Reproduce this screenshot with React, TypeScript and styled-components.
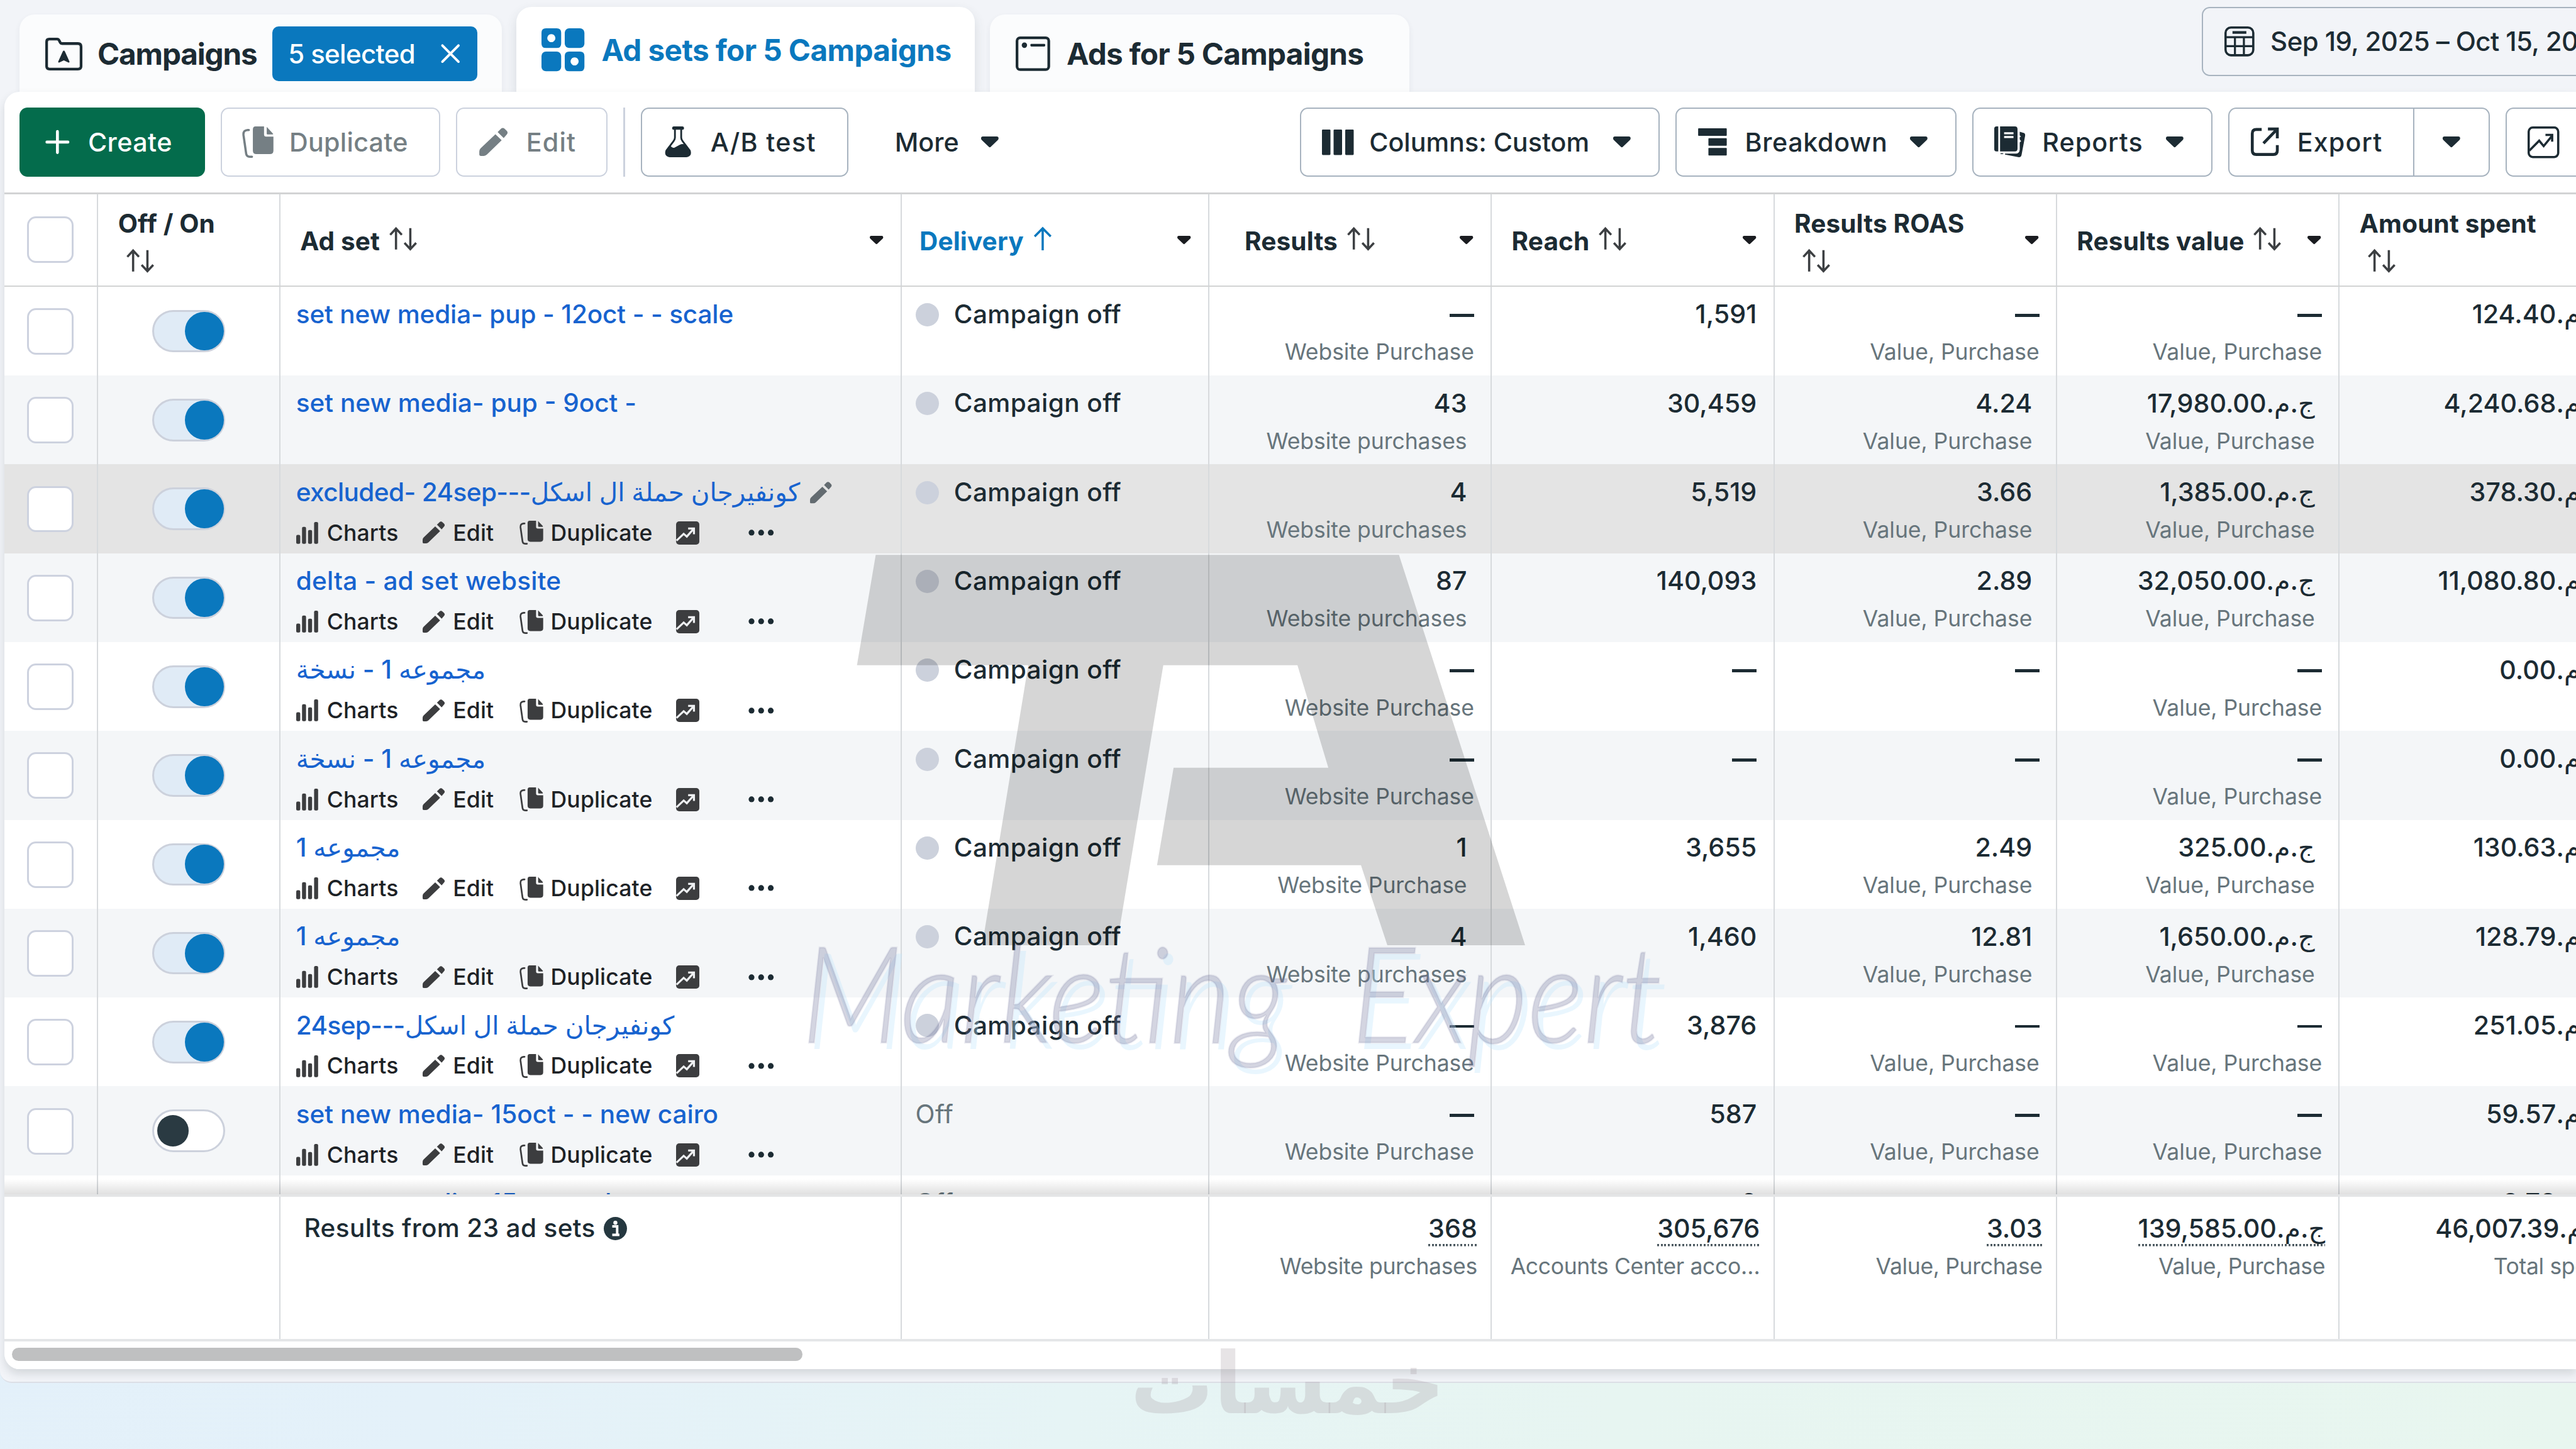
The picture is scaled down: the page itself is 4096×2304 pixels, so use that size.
import React from "react";
import styled, { createGlobalStyle, css } from "styled-components";

const r = (n: number) => `${((n * 4096) / 5760).toFixed(2)}px`;

const ink = "#1c2b33";
const muted = "#67757c";
const blue = "#0a78be";
const link = "#1763cf";
const line = "#d7dadd";
const latin = `Inter, "DejaVu Sans", sans-serif`;

const GlobalStyle = createGlobalStyle`
  html, body { margin: 0; padding: 0; }
  body { width: 4096px; height: 2304px; overflow: hidden; background: #e6f4f5; }
  * { box-sizing: border-box; }
`;

const Page = styled.div`
  position: relative;
  width: 4096px;
  height: 2304px;
  overflow: hidden;
  font-family: ${latin};
  color: ${ink};
  background: linear-gradient(97deg, #e3f0fa 0%, #e4f1f9 22%, #e6f4f5 45%, #e7f5f1 65%, #e8f6ef 100%);
`;

const Shell = styled.main`
  height: ${r(3093)};
  padding-left: ${r(10)};
  background: #f2f4f8;
  border-bottom: ${r(4)} solid #dcdfe6;
  border-bottom-left-radius: ${r(26)};
`;

/* ---------- tabs ---------- */
const TopBar = styled.header`
  display: flex;
  align-items: flex-end;
  height: ${r(205)};
  padding-left: ${r(33)};
`;

const Tab = styled.div<{ $active?: boolean; $w: number }>`
  flex: none;
  display: flex;
  align-items: center;
  width: ${(p) => r(p.$w)};
  height: ${(p) => r(p.$active ? 190 : 173)};
  margin-right: ${r(33)};
  border-radius: ${r(34)} ${r(34)} 0 0;
  background: ${(p) => (p.$active ? "#fff" : "#fbfcfd")};
  color: ${(p) => (p.$active ? blue : ink)};
  box-shadow: ${(p) => (p.$active ? `0 ${r(12)} ${r(26)} rgba(60, 70, 80, 0.14)` : `0 ${r(6)} ${r(14)} rgba(60, 70, 80, 0.07)`)};
  padding: ${r(4)} 0 0 ${(p) => r(p.$active ? 56 : 58)};
`;

const TabLabel = styled.span<{ $ls?: number; $gap: number }>`
  margin-left: ${(p) => r(p.$gap)};
  font-weight: 700;
  font-size: ${r(67)};
  line-height: ${r(90)};
  letter-spacing: ${(p) => r(p.$ls ?? 0)};
  white-space: nowrap;
`;

const Pill = styled.span`
  display: flex;
  align-items: center;
  width: ${r(458)};
  height: ${r(122)};
  margin-left: ${r(35)};
  padding-left: ${r(35)};
  border-radius: ${r(14)};
  background: ${blue};
  color: #fff;
  font-weight: 500;
  font-size: ${r(59)};
  letter-spacing: ${r(-0.9)};
  white-space: nowrap;
  svg { margin-left: auto; margin-right: ${r(40)}; }
`;

const DateRange = styled.div`
  flex: none;
  display: flex;
  align-items: center;
  align-self: flex-start;
  width: ${r(1100)};
  height: ${r(155)};
  margin: ${r(15)} 0 0 ${r(1739)};
  padding-left: ${r(47)};
  gap: ${r(36)};
  border: ${r(4)} solid #a7b3bf;
  border-radius: ${r(18)};
  font-weight: 500;
  font-size: ${r(59)};
  letter-spacing: ${r(-0.8)};
  white-space: nowrap;
`;

/* ---------- panel & toolbar ---------- */
const Panel = styled.section`
  position: relative;
  height: ${r(2857)};
  overflow: hidden;
  background: #fff;
  border-radius: ${r(34)} 0 0 ${r(34)};
`;

const PanelShadow = styled.div`
  position: relative;
  border-radius: ${r(34)} 0 0 ${r(34)};
  box-shadow: 0 ${r(10)} ${r(20)} rgba(50, 60, 70, 0.15);
`;

const Toolbar = styled.div`
  display: flex;
  align-items: center;
  height: ${r(225)};
  padding-left: ${r(33)};
  width: ${r(6400)};
`;

const Group = styled.div<{ $gap: number; $ml?: number }>`
  display: flex;
  align-items: center;
  gap: ${(p) => r(p.$gap)};
  margin-left: ${(p) => r(p.$ml ?? 0)};
`;

type Tone = "primary" | "disabled" | "normal" | "bare";
const tones = {
  primary: css`background: #046c4c; color: #fff; border-color: #046c4c;`,
  disabled: css`background: #fff; color: #757f84; border-color: #ccd2de;`,
  normal: css`background: #fff; color: ${ink}; border-color: #a7b3bf;`,
  bare: css`background: none; color: ${ink}; border-color: transparent; padding-left: ${r(66)};`,
};

const ToolButton = styled.button<{ $tone: Tone; $w: number; $ls?: number; $gap?: number }>`
  flex: none;
  display: flex;
  align-items: center;
  width: ${(p) => r(p.$w)};
  height: ${r(155)};
  padding: 0 ${r(62)} 0 ${r(46)};
  gap: ${(p) => r(p.$gap ?? 35)};
  border: ${r(4)} solid;
  border-radius: ${r(18)};
  ${(p) => tones[p.$tone]}
  font-family: ${latin};
  font-weight: 500;
  font-size: ${r(58)};
  letter-spacing: ${(p) => r(p.$ls ?? 0)};
  white-space: nowrap;
  .caret { margin-left: auto; }
`;

const Split = styled.div`
  flex: none;
  display: flex;
  ${ToolButton}:first-child { border-radius: ${r(18)} 0 0 ${r(18)}; border-right: 0; }
  ${ToolButton}:last-child { border-radius: 0 ${r(18)} ${r(18)} 0; padding: 0; justify-content: center; }
  ${ToolButton}:last-child .caret { margin: 0; }
`;

const Divider = styled.span`
  width: ${r(4)};
  height: ${r(155)};
  background: #ccd2de;
`;

/* ---------- table ---------- */
const columns = [210, 407, 1389, 688, 632, 632, 632, 632, 632].map(r).join(" ");

const HeadRow = styled.div`
  display: grid;
  grid-template-columns: ${columns};
  height: ${r(211)};
  border-top: ${r(5)} solid #d2d3d4;
  border-bottom: ${r(4)} solid #d2d3d4;
`;

const cellBorder = css`border-right: ${r(4)} solid ${line};`;

const HeadCell = styled.div<{ $pl: number; $pr?: number; $hot?: boolean }>`
  ${cellBorder}
  display: flex;
  align-items: center;
  justify-content: space-between;
  padding-left: ${(p) => r(p.$pl)};
  padding-right: ${(p) => r(p.$pr ?? 39)};
  color: ${(p) => (p.$hot ? blue : ink)};
  .caret { flex: none; color: #1a1c20; }
`;

const HeadLabel = styled.div<{ $stack?: boolean }>`
  display: flex;
  flex-direction: ${(p) => (p.$stack ? "column" : "row")};
  align-items: ${(p) => (p.$stack ? "flex-start" : "center")};
  gap: ${(p) => r(p.$stack ? 0 : 21)};
  padding-top: ${(p) => r(p.$stack ? 0 : 9)};
  margin-top: ${(p) => r(p.$stack ? -5 : 0)};
  font-weight: 700;
  font-size: ${r(57)};
  line-height: ${r(80)};
  letter-spacing: ${r(0.2)};
  white-space: nowrap;
  svg { margin: ${(p) => (p.$stack ? `${r(16)} 0 ${r(-2)} ${r(18)}` : `${r(-14)} 0 0`)}; }
`;

const Rows = styled.div`
  height: ${r(2030)};
  overflow: hidden;
  position: relative;
`;

const RowShade = styled.div`
  position: absolute;
  left: 0;
  right: 0;
  bottom: 0;
  height: ${r(34)};
  background: linear-gradient(to bottom, rgba(0, 0, 0, 0), rgba(0, 0, 0, 0.12));
`;

const Row = styled.div<{ $bg: string }>`
  display: grid;
  grid-template-columns: ${columns};
  height: ${r(198.7)};
  background: ${(p) => p.$bg};
`;

const Cell = styled.div<{ $pl?: number; $pt?: number }>`
  ${cellBorder}
  min-width: 0;
  padding-left: ${(p) => r(p.$pl ?? 0)};
  padding-top: ${(p) => r(p.$pt ?? 0)};
`;

const Checkbox = styled.span`
  display: block;
  width: ${r(104)};
  height: ${r(104)};
  border: ${r(5)} solid #cdd2df;
  border-radius: ${r(20)};
  background: #fff;
`;

const Track = styled.span<{ $on: boolean }>`
  display: flex;
  align-items: center;
  justify-content: ${(p) => (p.$on ? "flex-end" : "flex-start")};
  width: ${r(162)};
  height: ${r(95)};
  border: ${r(5)} solid #ccd1dc;
  border-radius: ${r(48)};
  background: ${(p) => (p.$on ? "#e0ebf6" : "#fff")};
  padding-left: ${(p) => r(p.$on ? 0 : 7)};
`;

const Knob = styled.span<{ $on: boolean }>`
  flex: none;
  width: ${(p) => r(p.$on ? 87 : 70)};
  height: ${(p) => r(p.$on ? 87 : 70)};
  margin-right: ${(p) => r(p.$on ? -2 : 0)};
  border-radius: 50%;
  background: ${(p) => (p.$on ? blue : "#2a3a42")};
`;

const NameLine = styled.div`
  display: flex;
  align-items: center;
  gap: ${r(22)};
  height: ${r(80)};
  color: #636b70;
`;

const Name = styled.a<{ $ls?: number }>`
  color: ${link};
  font-weight: 500;
  font-size: ${r(57)};
  line-height: ${r(80)};
  letter-spacing: ${(p) => r(p.$ls ?? 0)};
  white-space: nowrap;
  unicode-bidi: isolate;
`;

const Actions = styled.div`
  display: flex;
  align-items: center;
  height: ${r(64)};
  margin-top: ${r(18)};
  color: #3c3d3f;
`;

const Action = styled.span<{ $gap: number; $mr: number }>`
  display: flex;
  align-items: center;
  gap: ${(p) => r(p.$gap)};
  margin-right: ${(p) => r(p.$mr)};
  font-size: ${r(50)};
  font-weight: 500;
  letter-spacing: ${r(0.2)};
  white-space: nowrap;
  b { font-weight: 500; color: #1d2226; }
`;

const Status = styled.div<{ $off?: boolean }>`
  display: flex;
  align-items: center;
  gap: ${r(34)};
  font-size: ${r(57)};
  line-height: ${r(80)};
  font-weight: ${(p) => (p.$off ? 400 : 500)};
  letter-spacing: ${r(0.6)};
  white-space: nowrap;
  color: ${(p) => (p.$off ? muted : ink)};
`;

const Dot = styled.span`
  width: ${r(52)};
  height: ${r(52)};
  border-radius: 50%;
  background: #ccd1dc;
`;

const Metric = styled.div<{ $pr: number; $pt?: number }>`
  ${cellBorder}
  display: flex;
  flex-direction: column;
  align-items: flex-end;
  gap: ${r(10)};
  padding-top: ${(p) => r(p.$pt ?? 22)};
  padding-right: ${(p) => r(p.$pr)};
  white-space: nowrap;
`;

const Value = styled.span<{ $dotted?: boolean }>`
  font-size: ${r(58)};
  line-height: ${r(80)};
  font-weight: 500;
  letter-spacing: 0;
  unicode-bidi: isolate;
  ${(p) =>
    p.$dotted &&
    css`
      height: ${r(80)};
      background: repeating-linear-gradient(to right, #4a575e 0 ${r(4)}, transparent ${r(4)} ${r(8)}) left bottom / 100% ${r(5)} no-repeat;
    `}
`;

const Dash = styled.span`
  width: ${r(55)};
  height: ${r(7)};
  margin: ${r(39)} 0 ${r(34)};
  background: ${ink};
`;

const Sub = styled.span<{ $tight?: boolean }>`
  font-size: ${r(50)};
  line-height: ${r(70)};
  font-weight: 400;
  letter-spacing: ${(p) => r(p.$tight ? -0.5 : -0.1)};
  color: ${muted};
`;

const FootRow = styled.div`
  display: grid;
  grid-template-columns: ${r(617)} ${[1389, 688, 632, 632, 632, 632, 632].map(r).join(" ")};
  height: ${r(329)};
  border-top: ${r(6)} solid #e4e5e6;
  border-bottom: ${r(6)} solid #e4e6e8;
`;

const FootLabel = styled.div`
  display: flex;
  align-items: center;
  gap: ${r(18)};
  font-size: ${r(57)};
  line-height: ${r(80)};
  letter-spacing: ${r(0.5)};
  font-weight: 500;
  white-space: nowrap;
`;

const ScrollThumb = styled.div`
  width: ${r(1767)};
  height: ${r(30)};
  margin: ${r(13)} 0 0 ${r(17)};
  border-radius: ${r(15)};
  background: #bfc0c1;
`;

/* ---------- overlays ---------- */
const Monogram = styled.svg`
  position: absolute;
  left: ${r(1700)};
  top: ${r(1200)};
  width: ${r(2100)};
  height: ${r(1300)};
`;

const Stamp = styled.svg`
  position: absolute;
  left: ${r(2500)};
  top: ${r(2990)};
  width: ${r(760)};
  height: ${r(250)};
`;

/* ---------- icons ---------- */
const Svg = styled.svg<{ $w: number; $h: number }>`
  flex: none;
  display: block;
  width: ${(p) => r(p.$w)};
  height: ${(p) => r(p.$h)};
  fill: currentColor;
  overflow: visible;
`;

const Caret = ({ w = 39 }: { w?: number }) => (
  <Svg className="caret" $w={w} $h={w * 0.63} viewBox="0 0 39 24.5">
    <path d="M4 0h31q4 0 4 4v1q0 2-2 3.500L22 23q-2.500 2.500-5 0L2 8.500Q0 7 0 5V4q0-4 4-4z" />
  </Svg>
);

const FolderIcon = () => (
  <Svg $w={83} $h={73} viewBox="0 0 83 73">
    <path d="M3 64V9q0-6 6-6h17q4 0 5.500 4l2 4q1 2 4 2H73q7 0 7 7v44q0 6-7 6H10q-7 0-7-6z" fill="none" stroke="currentColor" strokeWidth="6" />
    <path d="M41.500 29q1.500 0 2.500 2l10 22q1 3-2 2.500l-10.500-5-10.500 5q-3 .5-2-2.500l10-22q1-2 2.500-2z" />
  </Svg>
);

const GridIcon = () => (
  <Svg $w={96} $h={96} viewBox="0 0 96 96">
    <path fillRule="evenodd" d="M10 0h24q10 0 10 10v24q0 10-10 10H10Q0 44 0 34V10Q0 0 10 0zM22 13a9 9 0 1 0 .01 0z" />
    <rect x="52" width="44" height="44" rx="10" />
    <rect y="52" width="44" height="44" rx="10" />
    <path fillRule="evenodd" d="M62 52h24q10 0 10 10v24q0 10-10 10H62q-10 0-10-10V62q0-10 10-10zM74 65a9 9 0 1 0 .01 0z" />
  </Svg>
);

const WindowIcon = () => (
  <Svg $w={77} $h={77} viewBox="0 0 77 77">
    <rect x="3" y="3" width="71" height="71" rx="7" fill="none" stroke="currentColor" strokeWidth="6" />
    <circle cx="19.500" cy="19.500" r="6" />
    <rect x="33" y="16.500" width="33" height="6" rx="2" />
  </Svg>
);

const CloseIcon = () => (
  <Svg $w={40} $h={40} viewBox="0 0 40 40">
    <path d="M2 2l36 36M38 2L2 38" stroke="currentColor" strokeWidth="5.500" strokeLinecap="round" />
  </Svg>
);

const CalendarIcon = () => (
  <Svg $w={67} $h={67} viewBox="0 0 67 67">
    <rect x="2.500" y="2.500" width="62" height="62" rx="12" fill="none" stroke="currentColor" strokeWidth="5" />
    <path d="M2 24h63M2 44h63M23.500 24v41M43.500 24v41" stroke="currentColor" strokeWidth="4.500" />
    <path d="M18 13.500h31" stroke="currentColor" strokeWidth="6" />
  </Svg>
);

const PlusIcon = () => (
  <Svg $w={70} $h={70} viewBox="0 0 70 70">
    <path d="M37 11.500v47M13.500 35h47" stroke="currentColor" strokeWidth="6.500" strokeLinecap="round" />
  </Svg>
);

const DuplicateIcon = ({ s = 70 }: { s?: number }) => (
  <Svg $w={s} $h={s} viewBox="0 0 70 70">
    <path d="M30 0h19v18q0 5 5 5h16v31q0 8-8 8H32q-8 0-8-8V7q0-7 6-7z" />
    <path d="M55 1l14 15q1 2-1 2H57q-2 0-2-2z" />
    <path d="M15 8h-3Q2 9 3 19l6 42q1 7 8 7h5" fill="none" stroke="currentColor" strokeWidth="5" strokeLinecap="round" />
  </Svg>
);

const PencilIcon = ({ s = 64, pad = 0 }: { s?: number; pad?: number }) => (
  <Svg $w={s} $h={s} viewBox={`${-pad} ${-pad} ${64 + pad * 2} ${64 + pad * 2}`}>
    <path d="M36 14.500L50 28 17 60q-3 3-7 3H3q-3 0-3-3v-7q0-4 3-7z" />
    <path d="M41 9.500l7-7q4.500-4 9 0l4 4q4.500 4.500 0 9L54.500 23z" />
  </Svg>
);

const FlaskIcon = () => (
  <Svg $w={70} $h={70} viewBox="0 0 70 70">
    <path d="M24.500 3.800h19" stroke="currentColor" strokeWidth="7.500" strokeLinecap="round" />
    <path d="M27 4v21q0 4-3 8L8 54q-4 12 9 13h34q13-1 9-13L44 33q-3-4-3-8V4" fill="none" stroke="currentColor" strokeWidth="4" />
    <path d="M17 42q2 7 9 5.500l11-6q6-3 12-1.500l10 13q4 13-9 16H18Q5 66 7 54z" />
  </Svg>
);

const ColumnsIcon = () => (
  <Svg $w={71} $h={57} viewBox="0 0 71 57">
    <rect width="19" height="57" rx="2" />
    <rect x="26" width="19" height="57" rx="2" />
    <rect x="52" width="19" height="57" rx="2" />
  </Svg>
);

const BreakdownIcon = () => (
  <Svg $w={70} $h={62} viewBox="-3 0 70 62">
    <rect width="64" height="17" rx="1.500" />
    <rect x="23" y="22" width="41" height="17" rx="1.500" />
    <rect x="23" y="44" width="41" height="17" rx="1.500" />
  </Svg>
);

const ReportsIcon = () => (
  <Svg $w={70} $h={70} viewBox="0 0 70 70">
    <path d="M5 0h4v56H5q-5 0-5-5V5q0-5 5-5z" />
    <path fillRule="evenodd" d="M13 0h33q6 0 6 6v44q0 6-6 6H13zM22 13v4.500h21V13zM22 21.500V26h21v-4.500z" />
    <path d="M57 12l7 2q6 1 5 7l-8 43q-1 5-6 5l-31-6v-2h24q8 0 9-9V36l3-3-3-4v-5l3-1-3-3zM14 60h6v2h-6z" />
  </Svg>
);

const ExportIcon = () => (
  <Svg $w={68} $h={64} viewBox="-3 0 68 64">
    <path d="M24 4H12q-9 0-9 9v38q0 9 9 9h38q9 0 9-9V39M38 3h21v21M59 3L28 35" fill="none" stroke="currentColor" strokeWidth="6.500" />
  </Svg>
);

const TrendIcon = () => (
  <Svg $w={71} $h={71} viewBox="0 0 71 71">
    <rect x="2.500" y="2.500" width="66" height="66" rx="9" fill="none" stroke="currentColor" strokeWidth="5" />
    <path d="M4 54l22-22 10 12 18-22M40 19h15v15" fill="none" stroke="currentColor" strokeWidth="5" />
  </Svg>
);

const TrendSolidIcon = () => (
  <Svg $w={52} $h={52} viewBox="0 0 52 52">
    <rect width="52" height="52" rx="7" />
    <path d="M1 43l16-15 7 6 15-17M27 16h13v13" fill="none" stroke="#eef0f2" strokeWidth="4.500" />
  </Svg>
);

const BarsIcon = () => (
  <Svg $w={49} $h={49} viewBox="0 0 49 49">
    <rect y="29" width="9" height="20" rx="3" />
    <rect x="13" y="11" width="9" height="38" rx="3" />
    <rect x="26.500" y="18" width="9" height="31" rx="3" />
    <rect x="40" width="9" height="49" rx="3" />
  </Svg>
);

const DotsIcon = () => (
  <Svg $w={57} $h={14} viewBox="0 0 57 14">
    <circle cx="7" cy="7" r="6.500" fill={ink} />
    <circle cx="28.500" cy="7" r="6.500" fill={ink} />
    <circle cx="50" cy="7" r="6.500" fill={ink} />
  </Svg>
);

const SortIcon = () => (
  <Svg $w={62} $h={50} viewBox="0 0 62 50">
    <path d="M15 49V3M2 16L15 2l13 14M47 1v46M34 34l13 14 13-14" fill="none" stroke="#3c3f42" strokeWidth="5" />
  </Svg>
);

const UpIcon = () => (
  <Svg $w={42} $h={52} viewBox="0 0 42 52">
    <path d="M21 52V3M3 21L21 3l18 18" fill="none" stroke="currentColor" strokeWidth="5" />
  </Svg>
);

const InfoIcon = () => (
  <Svg $w={52} $h={52} viewBox="0 0 52 52">
    <circle cx="26" cy="26" r="26" fill="#253840" />
    <circle cx="26" cy="13" r="4.500" fill="#fff" />
    <path d="M19 21h11v19M19 40h16" fill="none" stroke="#fff" strokeWidth="5.500" />
  </Svg>
);

/* ---------- data ---------- */
type Entry = {
  name: string;
  ls?: number;
  rtl?: boolean;
  plain?: boolean;
  hover?: boolean;
  off?: boolean;
  results?: string;
  goal: string;
  reach?: string;
  roas?: string;
  roasSub?: boolean;
  value?: string;
  spent: string;
};

const VP = "Value, Purchase";

const entries: Entry[] = [
  { name: "set new media- pup - 12oct - - scale", ls: -0.2, plain: true, goal: "Website Purchase", reach: "1,591", roasSub: true, spent: "124.40" },
  { name: "set new media- pup - 9oct -", plain: true, results: "43", goal: "Website purchases", reach: "30,459", roas: "4.24", roasSub: true, value: "17,980.00", spent: "4,240.68" },
  { name: "excluded- 24sep---كونفيرجان حملة ال اسكل", ls: -0.85, hover: true, results: "4", goal: "Website purchases", reach: "5,519", roas: "3.66", roasSub: true, value: "1,385.00", spent: "378.30" },
  { name: "delta - ad set website", ls: 0.3, results: "87", goal: "Website purchases", reach: "140,093", roas: "2.89", roasSub: true, value: "32,050.00", spent: "11,080.80" },
  { name: "مجموعه 1 - نسخة", rtl: true, goal: "Website Purchase", spent: "0.00" },
  { name: "مجموعه 1 - نسخة", rtl: true, goal: "Website Purchase", spent: "0.00" },
  { name: "مجموعه 1", rtl: true, results: "1", goal: "Website Purchase", reach: "3,655", roas: "2.49", roasSub: true, value: "325.00", spent: "130.63" },
  { name: "مجموعه 1", rtl: true, results: "4", goal: "Website purchases", reach: "1,460", roas: "12.81", roasSub: true, value: "1,650.00", spent: "128.79" },
  { name: "24sep---كونفيرجان حملة ال اسكل", ls: -0.85, goal: "Website Purchase", reach: "3,876", roasSub: true, spent: "251.05" },
  { name: "set new media- 15oct - - new cairo", off: true, goal: "Website Purchase", reach: "587", roasSub: true, spent: "59.57" },
  { name: "set new media- 15oct - adset", off: true, goal: "Website Purchase", reach: "6", roasSub: true, spent: "8.78" },
];

/* Amounts read right to left: currency first, then the figure. */
const Money = ({ n, dotted }: { n: string; dotted?: boolean }) => (
  <Value dir="rtl" $dotted={dotted}>
    {`ج.م.\u200F${n}`}
  </Value>
);

const MetricCell = ({ value, money, sub, alignEdge }: { value?: string; money?: boolean; sub?: string; alignEdge?: boolean }) => (
  <Metric $pr={value && !alignEdge ? 53 : 37}>
    {value ? money ? <Money n={value} /> : <Value>{value}</Value> : <Dash />}
    {sub && <Sub>{sub}</Sub>}
  </Metric>
);

const EntryRow = ({ e, i }: { e: Entry; i: number }) => (
  <Row $bg={e.hover ? "#e4e4e4" : i % 2 ? "#f4f6f8" : "#fff"}>
    <Cell $pl={51} $pt={48}>
      <Checkbox />
    </Cell>
    <Cell $pl={121} $pt={52}>
      <Track $on={!e.off}>
        <Knob $on={!e.off} />
      </Track>
    </Cell>
    <Cell $pl={35} $pt={23}>
      <NameLine>
        <Name dir={e.rtl ? "rtl" : "ltr"} $ls={e.ls}>{e.name}</Name>
        {e.hover && <PencilIcon s={49} />}
      </NameLine>
      {!e.plain && (
        <Actions>
          <Action $gap={20} $mr={54}>
            <BarsIcon />
            <b>Charts</b>
          </Action>
          <Action $gap={18} $mr={57}>
            <PencilIcon s={50} />
            <b>Edit</b>
          </Action>
          <Action $gap={17} $mr={53}>
            <DuplicateIcon s={53} />
            <b>Duplicate</b>
          </Action>
          <Action $gap={0} $mr={110}>
            <TrendSolidIcon />
          </Action>
          <DotsIcon />
        </Actions>
      )}
    </Cell>
    <Cell $pl={31} $pt={23}>
      {e.off ? (
        <Status $off>Off</Status>
      ) : (
        <Status>
          <Dot />
          Campaign off
        </Status>
      )}
    </Cell>
    <MetricCell value={e.results} sub={e.goal} />
    <MetricCell value={e.reach} alignEdge />
    <MetricCell value={e.roas} sub={e.roasSub ? VP : undefined} />
    <MetricCell value={e.value} money sub={VP} />
    <MetricCell value={e.spent} money alignEdge />
  </Row>
);

const Head = ({ label, pl = 44, stack, caret = true }: { label: string; pl?: number; stack?: boolean; caret?: boolean }) => (
  <HeadCell $pl={pl}>
    <HeadLabel $stack={stack}>
      {label}
      <SortIcon />
    </HeadLabel>
    {caret && <Caret w={30} />}
  </HeadCell>
);

const FootMetric = ({ children, sub }: { children: React.ReactNode; sub: string }) => (
  <Metric $pr={30} $pt={30}>
    {children}
    <Sub $tight>{sub}</Sub>
  </Metric>
);

export default function App() {
  return (
    <Page>
      <GlobalStyle />
      <Shell>
        <TopBar>
          <Tab $w={1079}>
            <FolderIcon />
            <TabLabel $gap={34} $ls={-1.6}>Campaigns</TabLabel>
            <Pill>
              5 selected
              <CloseIcon />
            </Pill>
          </Tab>
          <Tab $w={1025} $active>
            <GridIcon />
            <TabLabel $gap={38} $ls={-0.8}>Ad sets for 5 Campaigns</TabLabel>
          </Tab>
          <Tab $w={939}>
            <WindowIcon />
            <TabLabel $gap={37} $ls={-1}>Ads for 5 Campaigns</TabLabel>
          </Tab>
          <DateRange>
            <CalendarIcon />
            Sep 19, 2025 – Oct 15, 2025
          </DateRange>
        </TopBar>

        <PanelShadow>
          <Panel>
            <Toolbar>
              <Group $gap={35}>
                <ToolButton $tone="primary" $w={415} $ls={0.6}>
                  <PlusIcon />
                  Create
                </ToolButton>
                <ToolButton $tone="disabled" $w={492} $ls={0.4}>
                  <DuplicateIcon />
                  Duplicate
                </ToolButton>
                <ToolButton $tone="disabled" $w={339} $ls={1.6} $gap={38}>
                  <PencilIcon s={70} pad={3} />
                  Edit
                </ToolButton>
                <Divider />
                <ToolButton $tone="normal" $w={464} $ls={1.9} $gap={37}>
                  <FlaskIcon />
                  A/B test
                </ToolButton>
                <ToolButton $tone="bare" $w={366}>
                  More
                  <Caret />
                </ToolButton>
              </Group>
              <Group $gap={35} $ml={609}>
                <ToolButton $tone="normal" $w={804}>
                  <ColumnsIcon />
                  Columns: Custom
                  <Caret />
                </ToolButton>
                <ToolButton $tone="normal" $w={629} $ls={0.9} $gap={37}>
                  <BreakdownIcon />
                  Breakdown
                  <Caret />
                </ToolButton>
                <ToolButton $tone="normal" $w={537} $ls={1.4} $gap={38}>
                  <ReportsIcon />
                  Reports
                  <Caret />
                </ToolButton>
                <Split>
                  <ToolButton $tone="normal" $w={414} $ls={1.6} $gap={38}>
                    <ExportIcon />
                    Export
                  </ToolButton>
                  <ToolButton $tone="normal" $w={172}>
                    <Caret />
                  </ToolButton>
                </Split>
                <ToolButton $tone="normal" $w={520}>
                  <TrendIcon />
                  Charts
                </ToolButton>
              </Group>
            </Toolbar>

            <HeadRow>
              <HeadCell $pl={51} $pr={51}>
                <Checkbox />
              </HeadCell>
              <Head label="Off / On" stack caret={false} />
              <Head label="Ad set" />
              <HeadCell $pl={40} $pr={39} $hot>
                <HeadLabel>
                  Delivery
                  <UpIcon />
                </HeadLabel>
                <Caret w={30} />
              </HeadCell>
              <Head label="Results" pl={79} />
              <Head label="Reach" />
              <Head label="Results ROAS" stack />
              <Head label="Results value" />
              <Head label="Amount spent" stack caret={false} />
            </HeadRow>

            <Rows>
              {entries.map((e, i) => (
                <EntryRow key={i} e={e} i={i} />
              ))}
              <RowShade />
            </Rows>

            <FootRow>
              <Cell />
              <Cell $pl={53} $pt={30}>
                <FootLabel>
                  Results from 23 ad sets
                  <InfoIcon />
                </FootLabel>
              </Cell>
              <Cell />
              <FootMetric sub="Website purchases">
                <Value $dotted>368</Value>
              </FootMetric>
              <FootMetric sub="Accounts Center acco…">
                <Value $dotted>305,676</Value>
              </FootMetric>
              <FootMetric sub={VP}>
                <Value $dotted>3.03</Value>
              </FootMetric>
              <FootMetric sub={VP}>
                <Money n="139,585.00" dotted />
              </FootMetric>
              <FootMetric sub="Total spent">
                <Money n="46,007.39" />
              </FootMetric>
            </FootRow>
            <ScrollThumb />
          </Panel>
        </PanelShadow>
      </Shell>

      <Monogram viewBox="0 0 2100 1300">
        <path
          d="M258 41H1428L1710 914H1402L1343 735H887L924 517H1270L1201 288H901L797 914H496L599 288H216Z"
          fill="#000"
          fillOpacity="0.16"
        />
        <g fontFamily="Lato, sans-serif" fontStyle="italic" fontWeight="300" fontSize="300">
          <text x="104" y="1146" textLength="1085" lengthAdjust="spacingAndGlyphs" fill="#bfe6fb" fillOpacity="0.35">Marketing</text>
          <text x="1334" y="1146" textLength="695" lengthAdjust="spacingAndGlyphs" fill="#bfe6fb" fillOpacity="0.35">Expert</text>
          <text x="92" y="1132" textLength="1085" lengthAdjust="spacingAndGlyphs" fill="#70749c" fillOpacity="0.3" stroke="#70749c" strokeOpacity="0.12" strokeWidth="4">Marketing</text>
          <text x="1322" y="1132" textLength="695" lengthAdjust="spacingAndGlyphs" fill="#70749c" fillOpacity="0.3" stroke="#70749c" strokeOpacity="0.12" strokeWidth="4">Expert</text>
        </g>
      </Monogram>

      <Stamp viewBox="0 0 760 250">
        <text x="379" y="170" textAnchor="middle" textLength="704" lengthAdjust="spacingAndGlyphs" direction="rtl" fontFamily="DejaVu Sans, sans-serif" fontWeight="700" fontSize="190" fill="#a59aa4" fillOpacity="0.27">خمسات</text>
      </Stamp>
    </Page>
  );
}
